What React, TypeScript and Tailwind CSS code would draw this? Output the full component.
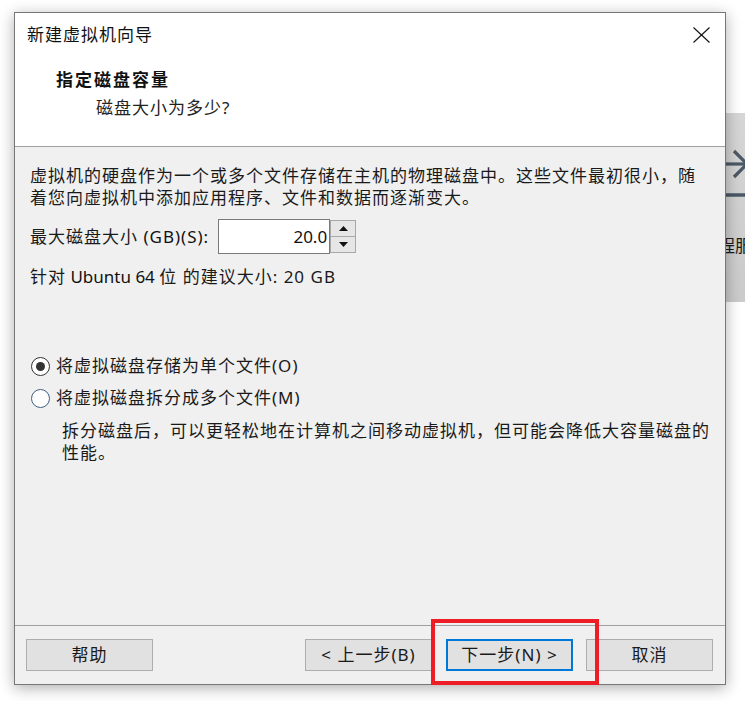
import React from "react";

const FONT = "font-['Noto_Sans','Noto_Sans_CJK_SC',sans-serif]";

function CloseIcon() {
  return (
    <svg width="17" height="16" viewBox="0 0 17 16" className="block">
      <line x1="0.5" y1="0.5" x2="16.5" y2="15.5" stroke="#111" strokeWidth="1.1" />
      <line x1="16.5" y1="0.5" x2="0.5" y2="15.5" stroke="#111" strokeWidth="1.1" />
    </svg>
  );
}

function Radio({ checked, ring }: { checked: boolean; ring: string }) {
  return (
    <span
      className={`ml-[1px] flex h-[19px] w-[19px] shrink-0 items-center justify-center rounded-full border bg-white ${ring}`}
    >
      {checked && <span className="h-[9px] w-[9px] rounded-full bg-[#333333]" />}
    </span>
  );
}

function Btn({ children, primary }: { children: React.ReactNode; primary?: boolean }) {
  return (
    <button
      className={`flex h-[32px] w-[127px] items-center justify-center bg-[#e1e1e1] text-[17px] tracking-[1px] text-[#1a1a1a] ${
        primary ? "border-2 border-[#0078d7]" : "border border-[#adadad]"
      }`}
    >
      {children}
    </button>
  );
}

export default function App() {
  return (
    <div className={`relative h-[701px] w-[745px] overflow-hidden bg-white pl-[14px] pt-[12px] ${FONT} text-[#1a1a1a]`}>
      {/* background window peeking out on the right */}
      <div className="absolute left-[700px] top-[113px] h-[189px] w-[60px] bg-gradient-to-b from-[#d6d6d6] to-[#cbcbcb]">
        <svg width="60" height="100" viewBox="0 0 60 100" className="absolute left-0 top-[30px]">
          <polyline points="34,8 47,21 34,34" fill="none" stroke="#4b5866" strokeWidth="3.2" />
          <line x1="20" y1="21" x2="47" y2="21" stroke="#4b5866" strokeWidth="3.2" />
          <line x1="20" y1="52" x2="60" y2="52" stroke="#4b5866" strokeWidth="3.5" />
        </svg>
        <span className="absolute left-[18px] top-[121px] whitespace-nowrap text-[17px] leading-[24px] text-[#1a1a1a]">
          程服
        </span>
      </div>

      {/* dialog */}
      <div className="relative z-10 flex h-[673px] w-[712px] flex-col border border-[#777777] bg-[#f0f0f0] shadow-[0_3px_14px_rgba(0,0,0,0.32)]">
        {/* header */}
        <div className="h-[134px] shrink-0 border-b border-[#a0a0a0] bg-white">
          <div className="mt-[10px] flex h-[24px] items-center justify-between pl-[12px] pr-[15px]">
            <span className="text-[17px] leading-[24px] tracking-[1px] text-[#111]">新建虚拟机向导</span>
            <CloseIcon />
          </div>
          <div className="mt-[21px] pl-[41px] text-[17px] font-bold leading-[24px] tracking-[2px] text-[#111]">
            指定磁盘容量
          </div>
          <div className="mt-[4px] pl-[81px] text-[17px] leading-[24px] tracking-[1px] text-[#222]">
            磁盘大小为多少?
          </div>
        </div>

        {/* body */}
        <div className="flex-1 px-[15px] pt-[18px] text-[17px] tracking-[1px]">
          <p className="whitespace-nowrap leading-[22px]">
            虚拟机的硬盘作为一个或多个文件存储在主机的物理磁盘中。这些文件最初很小，随
            <br />
            着您向虚拟机中添加应用程序、文件和数据而逐渐变大。
          </p>

          <div className="mt-[10px] flex h-[35px] items-center">
            <span className="whitespace-nowrap leading-[22px]">
              最大磁盘大小 <span className="text-[#111]">(GB)(S):</span>
            </span>
            <div className="ml-[9px] flex h-[35px] items-center">
              <div className="flex h-[35px] w-[112px] items-center justify-end border border-[#7a7a7a] bg-white pr-[2px] text-[17px] tracking-normal text-[#111]">
                20.0
              </div>
              <div className="flex h-[33px] w-[26px] flex-col border border-[#a8a8a8] bg-[#f0f0f0]">
                <div className="flex flex-1 items-center justify-center border-b border-[#a8a8a8] bg-[#e6e6e6]">
                  <svg width="9" height="5" viewBox="0 0 9 5">
                    <polygon points="0,5 4.5,0 9,5" fill="#111" />
                  </svg>
                </div>
                <div className="flex flex-1 items-center justify-center bg-[#e6e6e6]">
                  <svg width="9" height="5" viewBox="0 0 9 5">
                    <polygon points="0,0 4.5,5 9,0" fill="#111" />
                  </svg>
                </div>
              </div>
            </div>
          </div>

          <p className="mt-[12px] whitespace-nowrap leading-[22px]">
            针对<span className="tracking-normal text-[#111]"> Ubuntu 64 </span>位 的建议大小: 20 GB
          </p>

          <label className="mt-[66px] flex h-[24px] items-center">
            <Radio checked ring="border-[#333333]" />
            <span className="ml-[6px] whitespace-nowrap leading-[24px]">将虚拟磁盘存储为单个文件(O)</span>
          </label>
          <label className="mt-[8px] flex h-[24px] items-center">
            <Radio checked={false} ring="border-[#3f5f80]" />
            <span className="ml-[6px] whitespace-nowrap leading-[24px]">将虚拟磁盘拆分成多个文件(M)</span>
          </label>
          <p className="mt-[10px] whitespace-nowrap pl-[32px] leading-[22px]">
            拆分磁盘后，可以更轻松地在计算机之间移动虚拟机，但可能会降低大容量磁盘的
            <br />
            性能。
          </p>
        </div>

        {/* footer */}
        <div className="flex h-[59px] shrink-0 items-start border-t border-[#a0a0a0] pl-[11px] pr-[12px] pt-[13px]">
          <Btn>帮助</Btn>
          <div className="ml-auto flex">
            <Btn>&lt; 上一步(B)</Btn>
            <div className="ml-[14px]">
              <Btn primary>下一步(N) &gt;</Btn>
            </div>
            <div className="ml-[13px]">
              <Btn>取消</Btn>
            </div>
          </div>
        </div>
      </div>

      {/* red annotation box */}
      <div className="absolute left-[431px] top-[619px] z-20 h-[66px] w-[168px] border-4 border-[#ee1c24]" />
    </div>
  );
}
